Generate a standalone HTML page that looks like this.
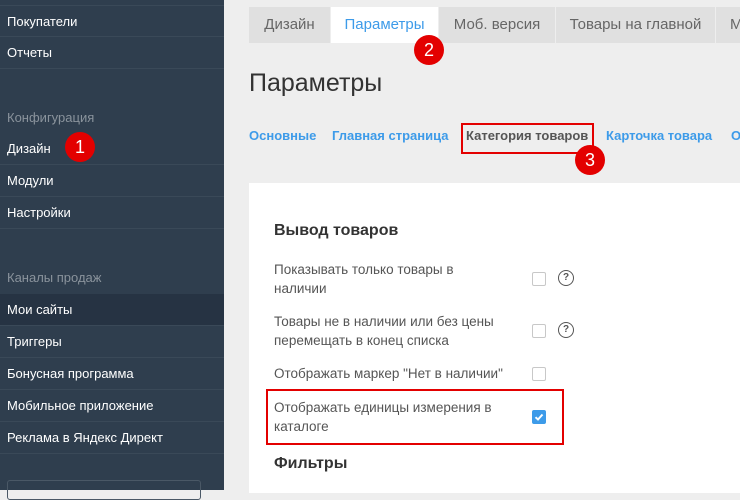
<!DOCTYPE html>
<html><head><meta charset="utf-8"><style>
*{margin:0;padding:0;box-sizing:border-box}
body{width:740px;height:490px;overflow:hidden;background:#eeeeee;font-family:"Liberation Sans","DejaVu Sans",sans-serif;position:relative}
.sb{position:absolute;left:0;top:0;width:224px;height:490px;background:#2f3e4e}
.it{position:absolute;left:0;width:224px;height:32px;border-bottom:1px solid #3a4958;color:#fff;font-size:13px;line-height:32px;padding-left:7px}
.hd{position:absolute;left:7px;color:#8a939c;font-size:13px}
.tab{position:absolute;top:7px;height:36px;background:#e0e0e0;color:#666;font-size:15px;line-height:36px;text-align:center}
.badge{position:absolute;width:30px;height:30px;border-radius:50%;background:#e30000;color:#fff;font-size:18px;line-height:30px;text-align:center}
.lnk{position:absolute;top:128px;font-size:13px;font-weight:bold;color:#3d9be9}
.panel{position:absolute;left:249px;top:183px;width:491px;height:310px;background:#fff}
.lbl{position:absolute;left:274px;color:#555;font-size:13.5px;line-height:19px}
.cb{position:absolute;left:532px;width:14px;height:14px;border:1px solid #c8c8c8;border-radius:2px;background:#fff}
.q{position:absolute;left:558px;width:16px;height:16px;border:1.5px solid #555;border-radius:50%;font-size:10px;font-weight:bold;color:#555;text-align:center;line-height:13px}
</style></head><body>
<div class="sb">
<div class="it" style="top:5px;border-top:1px solid #3a4958">Покупатели</div>
<div class="it" style="top:37px">Отчеты</div>
<div class="hd" style="top:110px">Конфигурация</div>
<div class="it" style="top:133px">Дизайн</div>
<div class="it" style="top:165px">Модули</div>
<div class="it" style="top:197px">Настройки</div>
<div class="hd" style="top:270px">Каналы продаж</div>
<div class="it" style="top:294px;background:#263343">Мои сайты</div>
<div class="it" style="top:326px">Триггеры</div>
<div class="it" style="top:358px">Бонусная программа</div>
<div class="it" style="top:390px">Мобильное приложение</div>
<div class="it" style="top:422px">Реклама в Яндекс Директ</div>
<div style="position:absolute;left:7px;top:480px;width:194px;height:20px;border:1px solid #4a5866;border-radius:3px"></div>
</div>
<div class="tab" style="left:249px;width:81px">Дизайн</div>
<div class="tab" style="left:331px;width:107px;background:#fff;color:#3d9be9">Параметры</div>
<div class="tab" style="left:439px;width:116px">Моб. версия</div>
<div class="tab" style="left:556px;width:159px">Товары на главной</div>
<div class="tab" style="left:716px;width:40px;text-align:left;padding-left:14px">М</div>
<div style="position:absolute;left:249px;top:69px;font-size:25px;color:#333">Параметры</div>
<div class="lnk" style="left:249px">Основные</div>
<div class="lnk" style="left:332px">Главная страница</div>
<div class="lnk" style="left:466px;color:#555">Категория товаров</div>
<div style="position:absolute;left:461px;top:123px;width:133px;height:31px;border:2px solid #e30000"></div>
<div class="lnk" style="left:606px">Карточка товара</div>
<div class="lnk" style="left:731px">О</div>
<div class="panel"></div>
<div style="position:absolute;left:274px;top:222px;font-size:16px;font-weight:bold;color:#333">Вывод товаров</div>
<div class="lbl" style="top:260px">Показывать только товары в<br>наличии</div>
<div class="cb" style="top:272px"></div><div class="q" style="top:270px">?</div>
<div class="lbl" style="top:312px">Товары не в наличии или без цены<br>перемещать в конец списка</div>
<div class="cb" style="top:324px"></div><div class="q" style="top:322px">?</div>
<div class="lbl" style="top:364px">Отображать маркер "Нет в наличии"</div>
<div class="cb" style="top:367px"></div>
<div style="position:absolute;left:266px;top:389px;width:298px;height:56px;border:2px solid #e30000"></div>
<div class="lbl" style="top:398px">Отображать единицы измерения в<br>каталоге</div>
<div class="cb" style="top:410px;background:#3d9be9;border-color:#3d9be9"><svg width="12" height="12" viewBox="0 0 12 12" style="position:absolute;left:0;top:0"><path d="M2.5 6.2 L5 8.5 L9.5 3.5" stroke="#fff" stroke-width="2" fill="none"/></svg></div>
<div style="position:absolute;left:274px;top:455px;font-size:16px;font-weight:bold;color:#333">Фильтры</div>
<div class="badge" style="left:65px;top:132px">1</div>
<div class="badge" style="left:414px;top:35px">2</div>
<div class="badge" style="left:575px;top:145px">3</div>
</body></html>
